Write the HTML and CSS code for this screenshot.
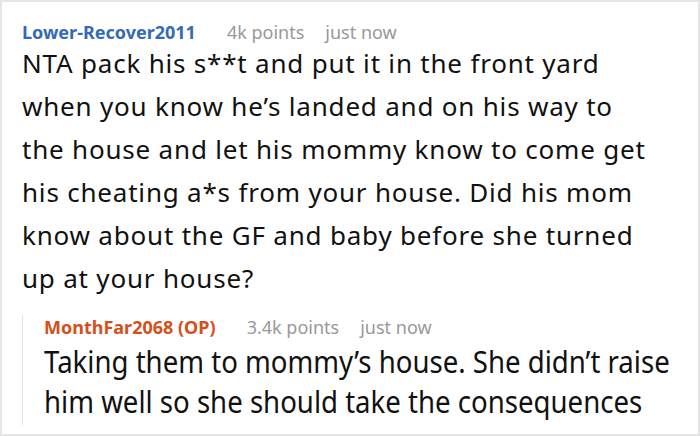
FILE: index.html
```html
<!DOCTYPE html>
<html>
<head>
<meta charset="utf-8">
<link rel="stylesheet" href="styles.css">
</head>
<body>
<div class="card">
  <div class="comment">
    <div class="meta">
      <span class="user">Lower-Recover2011</span>
      <span class="points">4k points</span>
      <span class="time">just now</span>
    </div>
    <p class="text">NTA pack his s**t and put it in the front yard when you know he’s landed and on his way to the house and let his mommy know to come get his cheating a*s from your house. Did his mom know about the GF and baby before she turned up at your house?</p>
    <div class="reply">
      <div class="meta">
        <span class="user op">MonthFar2068 (OP)</span>
        <span class="points">3.4k points</span>
        <span class="time">just now</span>
      </div>
      <p class="text reply-text">Taking them to mommy’s house. She didn’t raise him well so she should take the consequences</p>
    </div>
  </div>
</div>
</body>
</html>
```
FILE: styles.css
```css
html, body {
  margin: 0;
  padding: 0;
  background: #fff;
}
.card {
  box-sizing: border-box;
  width: 700px;
  height: 436px;
  border: 2px solid #e6e6e6;
  overflow: hidden;
  font-family: "Noto Sans", "Open Sans", sans-serif;
}
.comment {
  padding: 18px 20px 0 20px;
}
.meta {
  display: flex;
  align-items: baseline;
  font-size: 18px;
  line-height: 24px;
}
.user {
  font-size: 18px;
  font-weight: 700;
  color: #336bb5;
  margin-right: 31px;
}
.user.op {
  color: #d4501c;
}
.points {
  color: #999;
  margin-right: 21px;
}
.time {
  color: #999;
}
.text {
  margin: -2px 0 0 0;
  font-size: 26px;
  letter-spacing: 0.8px;
  line-height: 43px;
  color: #111;
  width: 636px;
}
.reply {
  margin-top: 15px;
  margin-left: 0;
  padding-left: 21px;
  border-left: 1px solid #e2e2e2;
  height: 110px;
}
.reply-text {
  margin-top: 2px;
  font-size: 31px;
  letter-spacing: 0;
  line-height: 40px;
  width: 720px;
  transform: scaleX(0.89);
  transform-origin: left top;
}
```
